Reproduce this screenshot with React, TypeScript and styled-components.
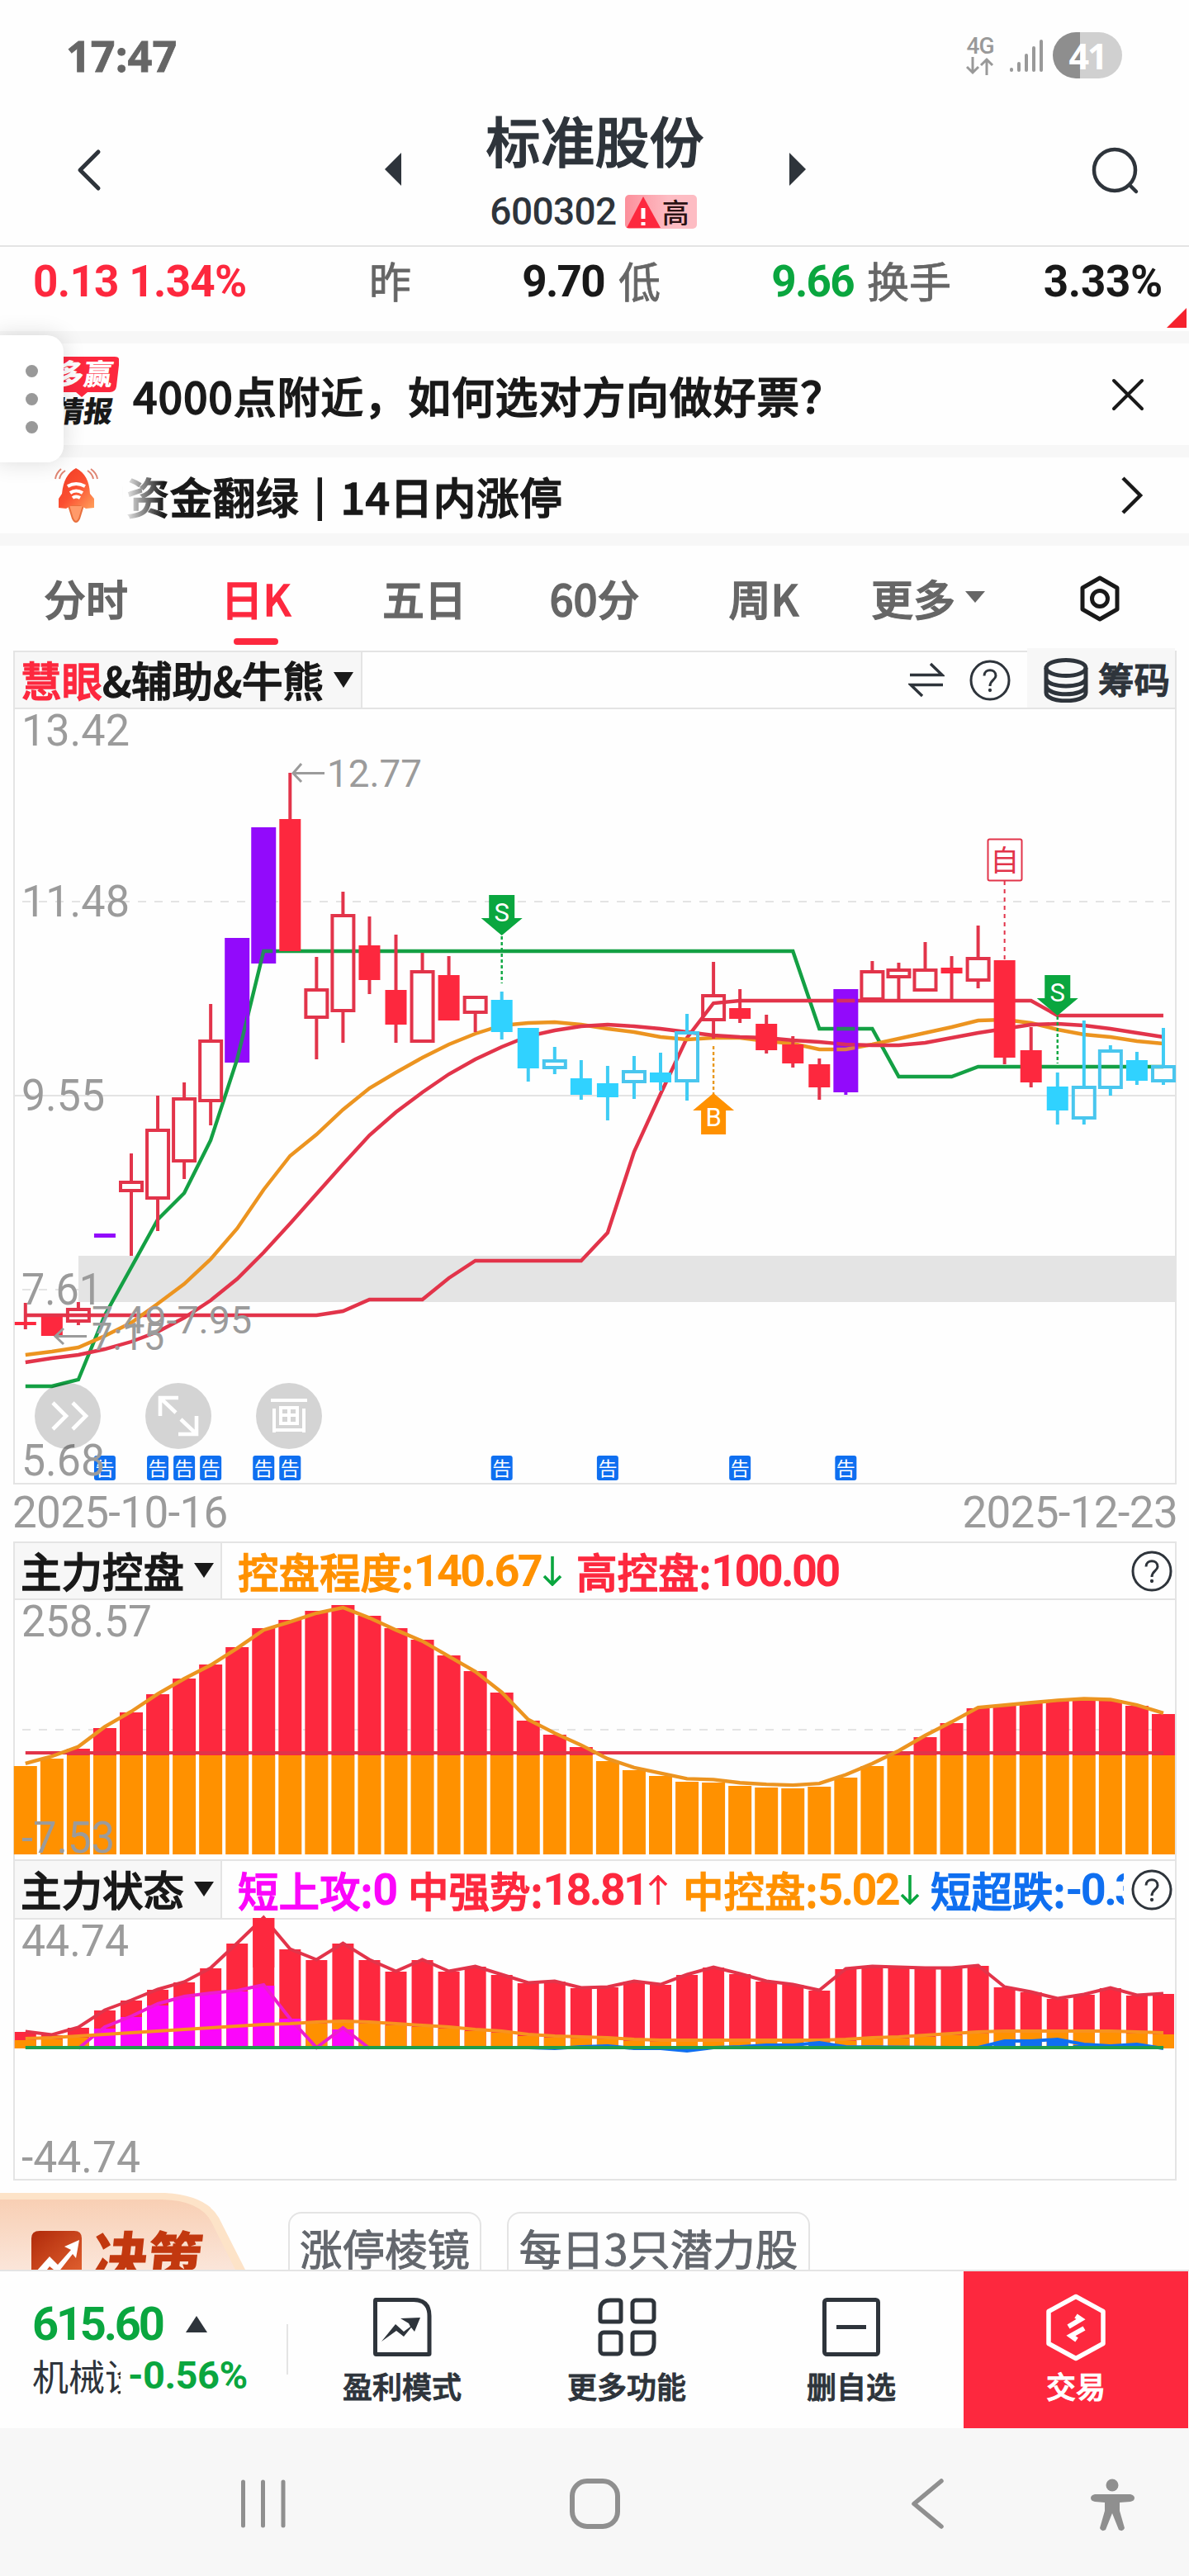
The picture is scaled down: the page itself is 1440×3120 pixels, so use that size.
import React from "react";
import styled, { createGlobalStyle, css } from "styled-components";

const RED = "#fd283e";
const LINE_RED = "#e2344a";
const GREEN = "#0aa63f";
const LINE_GREEN = "#14a044";
const ORANGE = "#ff9100";
const LINE_ORANGE = "#ec9420";
const CYAN = "#30d2ff";
const LINE_CYAN = "#49c6ee";
const PURPLE = "#920afb";
const MAGENTA = "#fb06fb";
const BLUE = "#0f6ff0";
const INK = "#2e343b";
const GREY = "#9b9b9b";
const BORDER = "#e4e4e4";
const CJK = '"Noto Sans CJK SC", sans-serif';

/* a medium weight between the family's regular and bold */
const medium = css`
  -webkit-text-stroke: 1.3px currentColor;
`;

const GlobalStyle = createGlobalStyle`
  html, body { margin: 0; padding: 0; background: #fff; }
  * { box-sizing: border-box; }
  svg { display: block; flex: none; }
`;

const Screen = styled.div`
  position: relative;
  width: 1440px;
  height: 3120px;
  overflow: hidden;
  display: flex;
  flex-direction: column;
  background: #fefefe;
  font-family: Roboto, ${CJK};
  color: #191919;
`;

/* ---------- status bar ---------- */
const StatusBar = styled.div`
  height: 134px;
  flex: none;
  display: flex;
  align-items: center;
  justify-content: space-between;
  padding: 0 81px 0 80px;
`;
const Clock = styled.div`
  font: 700 52px/60px "Open Sans", sans-serif;
  letter-spacing: 0.1px;
  -webkit-text-stroke: 0.8px currentColor;
  color: #666;
`;
const StatusIcons = styled.div`
  display: flex;
  align-items: center;
`;
const Network = styled.div`
  width: 40px;
  display: flex;
  flex-direction: column;
  align-items: center;
  margin-right: 16px;
  font: 500 28px/26px Roboto, sans-serif;
  letter-spacing: -1px;
  color: #999;
`;
const Battery = styled.div`
  width: 84px;
  height: 56px;
  margin-left: 12px;
  border-radius: 28px;
  background: linear-gradient(90deg, #8e8e8e 33px, #d0d0d0 33px);
  color: #fff;
  text-align: center;
  font: 700 43px/57px "Open Sans", sans-serif;
  letter-spacing: -2px;
`;

/* ---------- title bar ---------- */
const TitleBar = styled.header`
  height: 165px;
  flex: none;
  display: flex;
  align-items: flex-start;
  justify-content: space-between;
  border-bottom: 2px solid ${BORDER};
  padding: 0 60px 0 91px;
`;
const IconSlot = styled.div`
  display: flex;
  padding-top: 44px;
  width: 60px;
  justify-content: ${(p: { $end?: boolean }) => (p.$end ? "flex-end" : "flex-start")};
`;
const TitleNav = styled.div`
  display: flex;
  width: 510px;
  margin-left: 15px;
  margin-right: 45px;
  justify-content: space-between;
`;
const NavArrow = styled.div`
  padding-top: 51px;
`;
const TitleBlock = styled.div`
  display: flex;
  flex-direction: column;
  align-items: center;
`;
const StockName = styled.div`
  margin-top: -4px;
  font: 500 66px/76px ${CJK};
  ${medium}
  color: ${INK};
  white-space: nowrap;
`;
const StockCode = styled.div`
  display: flex;
  align-items: center;
  gap: 10px;
  height: 42px;
  margin-top: 29px;
  margin-left: -4px;
  font: 500 46px/42px Roboto, sans-serif;
  letter-spacing: -0.6px;
  color: ${INK};
`;
const RiskTag = styled.div`
  width: 87px;
  height: 41px;
  display: flex;
  align-items: center;
  border-radius: 5px;
  background: linear-gradient(90deg, #fc8f9b, #fdbcc3 60%);
  font: 500 33px/40px ${CJK};
  letter-spacing: 0;
  color: #2a1214;
`;

/* ---------- quote row ---------- */
const QuoteRow = styled.div`
  height: 102px;
  flex: none;
  position: relative;
  display: flex;
  align-items: flex-start;
  padding: 16px 32px 0 40px;
`;
const QuoteCell = styled.div`
  display: flex;
  align-items: center;
  justify-content: space-between;
  height: 52px;
  width: ${(p: { $w: number; $gap?: number }) => p.$w}px;
  margin-left: ${(p: { $w: number; $gap?: number }) => p.$gap || 0}px;
  white-space: nowrap;
`;
const QuoteLabel = styled.span`
  margin-top: -5px;
  font: 400 51px/52px ${CJK};
  -webkit-text-stroke: 0.8px currentColor;
  color: #666;
`;
const QuoteValue = styled.span`
  font: 700 53px/52px Roboto, sans-serif;
  letter-spacing: ${(p: { $c?: string; $ls?: number }) => (p.$ls === undefined ? -1.7 : p.$ls)}px;
  color: ${(p: { $c?: string; $ls?: number }) => p.$c || "#191919"};
`;
const Corner = styled.svg`
  position: absolute;
  right: 3px;
  bottom: 4px;
`;

/* ---------- banners ---------- */
const Divider = styled.div`
  height: 15px;
  flex: none;
  background: #f7f7f7;
`;
const Banner = styled.div`
  height: ${(p: { $h: number }) => p.$h}px;
  flex: none;
  display: flex;
  align-items: center;
  padding: 0 54px 0 0;
`;
const BannerLogo = styled.div`
  width: 144px;
  height: 123px;
  padding-top: 16px;
  display: flex;
  justify-content: flex-end;
`;
const BannerText = styled.div`
  flex: 1;
  padding: 2px 0 0 17px;
  font: 500 52px/60px ${CJK};
  letter-spacing: 0.8px;
  ${medium}
  white-space: nowrap;
`;
const Ticker = styled(BannerText)`
  padding-left: 0;
  letter-spacing: 0.2px;
  word-spacing: 6px;
  text-indent: -47px;
  margin-left: 28px;
  overflow: hidden;
  mask-image: linear-gradient(90deg, transparent 0, #000 50px);
`;
const Handle = styled.div`
  position: absolute;
  left: -4px;
  top: 406px;
  width: 81px;
  height: 154px;
  border-radius: 0 20px 20px 0;
  background: #fff;
  box-shadow: 0 0 28px rgba(0, 0, 0, 0.14);
  display: flex;
  flex-direction: column;
  align-items: center;
  justify-content: center;
  gap: 19px;
  padding-left: 4px;
`;
const Dot = styled.i`
  width: 15px;
  height: 15px;
  border-radius: 50%;
  background: #999;
`;

/* ---------- tabs ---------- */
const Tabs = styled.nav`
  height: 127px;
  flex: none;
  display: flex;
  padding: 0 0 0 2px;
`;
const Tab = styled.div`
  position: relative;
  width: ${(p: { $w: number; $on?: boolean }) => p.$w}px;
  padding-top: 36px;
  display: flex;
  justify-content: center;
  gap: 12px;
  font: 500 51px/54px ${CJK};
  ${medium}
  color: ${(p: { $w: number; $on?: boolean }) => (p.$on ? RED : "#666")};
  white-space: nowrap;
  &::after {
    content: "";
    display: ${(p: { $w: number; $on?: boolean }) => (p.$on ? "block" : "none")};
    position: absolute;
    top: 112px;
    width: 54px;
    height: 8px;
    border-radius: 4px;
    background: ${RED};
  }
`;

/* ---------- chart panels ---------- */
const Panel = styled.section`
  width: 1409px;
  flex: none;
  margin-left: 16px;
  border: 2px solid ${BORDER};
  border-top-width: ${(p: { $join?: boolean }) => (p.$join ? 0 : 2)}px;
`;
const PanelHead = styled.div`
  height: ${(p: { $h: number }) => p.$h}px;
  display: flex;
  align-items: stretch;
  border-bottom: 2px solid ${BORDER};
`;
const Picker = styled.div`
  width: ${(p: { $w: number }) => p.$w}px;
  flex: none;
  display: flex;
  align-items: center;
  gap: 12px;
  padding: 0 0 1px 7px;
  background: #f7f7f7;
  border-right: 2px solid ${BORDER};
  font: 500 49.5px/60px ${CJK};
  ${medium}
  white-space: nowrap;
  & > em { font-style: normal; color: ${RED}; margin-right: -12px; }
`;
const Readings = styled.div`
  flex: 1;
  min-width: 0;
  overflow: hidden;
  display: flex;
  align-items: center;
  padding-left: 19px;
  white-space: nowrap;
`;
const Reading = styled.div`
  display: flex;
  align-items: center;
  height: 60px;
  flex: none;
  width: ${(p: { $w: number; $c: string }) => p.$w}px;
  color: ${(p: { $w: number; $c: string }) => p.$c};
  font: 500 49.5px/60px ${CJK};
  ${medium}
  & > b {
    font: 700 54px/60px Roboto, sans-serif;
    letter-spacing: -2.7px;
    margin-right: 2px;
    -webkit-text-stroke: 0;
  }
`;
const HelpSlot = styled.div`
  width: ${(p: { $w: number; $r?: number }) => p.$w}px;
  display: flex;
  align-items: center;
  justify-content: flex-end;
  padding-right: ${(p: { $w: number; $r?: number }) => p.$r || 3}px;
`;
const ChipsButton = styled.div`
  width: 179px;
  margin-top: -5px;
  padding: 5px 0 0 20px;
  display: flex;
  align-items: center;
  gap: 12px;
  background: #f7f7f7;
  font: 500 43.5px/60px ${CJK};
  ${medium}
  color: ${INK};
  white-space: nowrap;
  & > span { margin-top: -4px; }
`;
const Plot = styled.svg`
  overflow: visible;
  width: 1405px;
`;
const DateRow = styled.div`
  height: 69px;
  flex: none;
  display: flex;
  justify-content: space-between;
  padding: 4px 14px 0 15px;
  font: 400 53px/60px Roboto, sans-serif;
  letter-spacing: -0.7px;
  color: ${GREY};
`;

/* ---------- promo row ---------- */
const PromoRow = styled.div`
  height: 108px;
  flex: none;
  display: flex;
  align-items: flex-start;
  overflow: hidden;
`;
const PromoBadge = styled.div`
  position: relative;
  width: 349px;
  height: 108px;
  flex: none;
`;
const PromoWord = styled.div`
  position: absolute;
  left: 112px;
  top: 51px;
  font: 900 67px/76px ${CJK};
  transform: skewX(-6deg);
  color: #c2380f;
`;
const Chip = styled.div`
  height: 120px;
  width: ${(p: { $w: number }) => p.$w}px;
  margin: 38px 31px 0 0;
  padding-top: 11px;
  flex: none;
  border: 2px solid ${BORDER};
  border-radius: 16px;
  text-align: center;
  font: 400 51.5px/60px ${CJK};
  -webkit-text-stroke: 1px currentColor;
  color: #63676d;
  white-space: nowrap;
`;

/* ---------- action bar ---------- */
const ActionBar = styled.div`
  height: 192px;
  flex: none;
  display: flex;
  border-top: 2px solid ${BORDER};
`;
const IndexBox = styled.div`
  width: 351px;
  padding: 33px 0 0 39px;
  position: relative;
  &::after {
    content: "";
    position: absolute;
    right: 2px;
    top: 64px;
    width: 2px;
    height: 61px;
    background: ${BORDER};
  }
`;
const IndexLine = styled.div`
  display: flex;
  align-items: center;
  height: 62px;
  gap: ${(p: { $gap: number }) => p.$gap}px;
  white-space: nowrap;
`;
const IndexValue = styled.b`
  font: 700 ${(p: { $s: number; $ls: number }) => p.$s}px/60px Roboto, sans-serif;
  letter-spacing: ${(p: { $s: number; $ls: number }) => p.$ls}px;
  color: ${GREEN};
`;
const IndexName = styled.span`
  width: 107px;
  overflow: hidden;
  font: 400 44px/60px ${CJK};
  color: ${INK};
`;
const Action = styled.div`
  width: 272px;
  display: flex;
  flex-direction: column;
  align-items: center;
  padding-top: 25px;
  gap: 4px;
  font: 500 36px/46px ${CJK};
  -webkit-text-stroke: 1px currentColor;
  color: ${(p: { $hot?: boolean }) => (p.$hot ? "#fff" : INK)};
  background: ${(p: { $hot?: boolean }) => (p.$hot ? RED : "transparent")};
`;

/* ---------- system navigation ---------- */
const SysNav = styled.div`
  height: 180px;
  flex: none;
  background: #f7f7f7;
`;

/* ---------- small icons ---------- */
const Tri = ({ w, h, color, dir }: { w: number; h: number; color: string; dir: string }) => {
  const pts: Record<string, string> = {
    down: `0,0 ${w},0 ${w / 2},${h}`,
    up: `0,${h} ${w},${h} ${w / 2},0`,
    left: `${w},0 ${w},${h} 0,${h / 2}`,
    right: `0,0 0,${h} ${w},${h / 2}`,
  };
  return (
    <svg width={w} height={h}>
      <polygon points={pts[dir]} fill={color} />
    </svg>
  );
};

const Help = () => (
  <svg width="50" height="50" viewBox="0 0 50 50" fill="none" stroke={INK} strokeWidth="3">
    <circle cx="25" cy="25" r="23" />
    <path d="M18 19.5C18 10.5 32 10.5 32 19.5C32 24.5 25 24.5 25 32" />
    <circle cx="25" cy="37" r="1.4" fill={INK} strokeWidth="1.5" />
  </svg>
);

const Trend = ({ up }: { up?: boolean }) => (
  <svg width="24" height="36" viewBox="0 0 24 36" fill="none" stroke={up ? RED : GREEN} strokeWidth="3.6">
    <path d={up ? "M12 36V3M2 12L12 2L22 12" : "M12 0V33M2 24L12 34L22 24"} />
  </svg>
);

/* ---------- main chart data ---------- */
const X0 = 30.8;
const STEP = 32.05;
const cx = (i: number) => X0 + i * STEP;

type Kind = "h" | "f" | "ch" | "cf" | "p";
// kind, body top, body bottom, wick top, wick bottom
const candles: [Kind, number, number, number, number][] = [
  ["f", 1601, 1605, 1578, 1610],
  ["f", 1595, 1618, 1593, 1618],
  ["h", 1584, 1602, 1577, 1605],
  ["p", 1494, 1499, 1494, 1499],
  ["h", 1430, 1444, 1397, 1521],
  ["h", 1367, 1453, 1327, 1491],
  ["h", 1329, 1408, 1311, 1428],
  ["h", 1259, 1335, 1216, 1363],
  ["p", 1136, 1287, 1136, 1287],
  ["p", 1002, 1167, 1002, 1167],
  ["f", 992, 1152, 936, 1152],
  ["h", 1197, 1234, 1159, 1283],
  ["h", 1107, 1226, 1080, 1263],
  ["f", 1145, 1187, 1110, 1204],
  ["f", 1199, 1241, 1132, 1263],
  ["h", 1175, 1263, 1154, 1263],
  ["f", 1181, 1236, 1158, 1236],
  ["h", 1206, 1228, 1206, 1250],
  ["cf", 1211, 1250, 1201, 1259],
  ["cf", 1245, 1294, 1245, 1310],
  ["ch", 1283, 1295, 1268, 1301],
  ["cf", 1306, 1326, 1284, 1332],
  ["cf", 1312, 1329, 1291, 1357],
  ["ch", 1296, 1312, 1279, 1331],
  ["cf", 1299, 1311, 1275, 1321],
  ["ch", 1249, 1311, 1228, 1333],
  ["h", 1204, 1237, 1165, 1258],
  ["f", 1221, 1234, 1198, 1239],
  ["f", 1240, 1272, 1229, 1276],
  ["f", 1265, 1288, 1255, 1293],
  ["f", 1289, 1317, 1282, 1332],
  ["p", 1198, 1323, 1198, 1326],
  ["h", 1175, 1212, 1164, 1212],
  ["h", 1173, 1185, 1166, 1212],
  ["h", 1173, 1201, 1141, 1201],
  ["f", 1172, 1179, 1158, 1211],
  ["h", 1159, 1189, 1121, 1197],
  ["f", 1163, 1281, 1163, 1289],
  ["f", 1272, 1311, 1244, 1317],
  ["cf", 1316, 1345, 1299, 1362],
  ["ch", 1315, 1356, 1236, 1362],
  ["ch", 1271, 1319, 1266, 1327],
  ["cf", 1284, 1309, 1274, 1314],
  ["ch", 1290, 1311, 1245, 1314],
];

const maOrange = [
  1641, 1637, 1632, 1618, 1602, 1579, 1555, 1525, 1488, 1441, 1400, 1374, 1344, 1318, 1299, 1281, 1265, 1252,
  1242, 1239, 1238, 1241, 1246, 1250, 1256, 1259, 1257, 1257, 1261, 1264, 1271, 1271, 1265, 1258, 1251, 1244,
  1236, 1235, 1239, 1247, 1253, 1256, 1261, 1264,
];
const maRed = [
  1650, 1645, 1641, 1634, 1625, 1613, 1596, 1575, 1549, 1517, 1482, 1446, 1410, 1375, 1347, 1323, 1301, 1283,
  1268, 1255, 1248, 1243, 1241, 1243, 1246, 1250, 1254, 1256, 1257, 1260, 1262, 1265, 1266, 1266, 1263, 1257,
  1251, 1246, 1241, 1240, 1242, 1246, 1251, 1256,
];
const pairs = (a: [number, number][]) => a.map(([i, y]) => `${cx(i)},${y}`).join(" ");
const series = (a: number[]) => a.map((y, i) => `${cx(i)},${y}`).join(" ");
const greenStep = pairs([
  [0, 1679], [1, 1679], [2, 1671], [3, 1593], [4, 1535], [5, 1477], [6, 1445], [7, 1381], [8, 1283], [9, 1152],
  [29, 1152], [30, 1246], [32, 1246], [33, 1304], [35, 1304], [36, 1292], [43, 1292],
]);
const redStep = pairs([
  [0, 1593], [11, 1593], [12, 1588], [13, 1574], [15, 1574], [16, 1548], [17, 1527], [21, 1527], [22, 1493],
  [23, 1395], [24, 1325], [25, 1257], [26, 1215], [27, 1212], [38, 1212], [39, 1230], [43, 1230],
]);

const MainLines = () => (
  <g fill="none" strokeWidth="4.4">
    <polyline points={greenStep} stroke={LINE_GREEN} />
    <polyline points={redStep} stroke={LINE_RED} />
    <polyline points={series(maOrange)} stroke={LINE_ORANGE} />
    <polyline points={series(maRed)} stroke={LINE_RED} />
  </g>
);

const Candle = ({ i, k, t, b, wt, wb }: { i: number; k: Kind; t: number; b: number; wt: number; wb: number }) => {
  const x = cx(i);
  const color = k === "p" ? PURPLE : k[0] === "c" ? (k === "cf" ? CYAN : LINE_CYAN) : k === "f" ? RED : LINE_RED;
  const wick = k === "p" ? PURPLE : k[0] === "c" ? "#3fccf4" : LINE_RED;
  const hollow = k === "h" || k === "ch";
  const half = k === "p" && b - t > 20 ? 15 : 13;
  return (
    <g>
      {wt < t && <line x1={x} x2={x} y1={wt} y2={t} stroke={wick} strokeWidth="4" />}
      {wb > b && <line x1={x} x2={x} y1={b} y2={wb} stroke={wick} strokeWidth="4" />}
      {hollow ? (
        <rect x={x - 13} y={t + 2} width="26" height={b - t - 4} fill="none" stroke={color} strokeWidth="4" />
      ) : (
        <rect x={x - half} y={t} width={half * 2} height={b - t} fill={color} />
      )}
    </g>
  );
};

const Axis = ({ x = 26, y, w, s = 53, children }: { x?: number; y: number; w: number; s?: number; children: string }) => (
  <text x={x} y={y} fontSize={s} textLength={w} lengthAdjust="spacingAndGlyphs" fill={GREY} fontFamily="Roboto, sans-serif">
    {children}
  </text>
);

const SellMark = ({ i, y, end }: { i: number; y: number; end: number }) => {
  const x = cx(i);
  return (
    <g>
      <line x1={x} x2={x} y1={y + 50} y2={end} stroke={GREEN} strokeWidth="2.4" strokeDasharray="4 3" />
      <polygon
        points={`${x - 15.5},${y} ${x + 15.5},${y} ${x + 15.5},${y + 28} ${x + 25},${y + 28} ${x},${y + 49} ${x - 25},${y + 28} ${x - 15.5},${y + 28}`}
        fill={GREEN}
      />
      <text x={x} y={y + 32} fontSize="31" textAnchor="middle" fill="#fff" fontFamily="Roboto, sans-serif">S</text>
    </g>
  );
};

const ToolCircle = ({ x, children }: { x: number; children: React.ReactNode }) => (
  <g transform={`translate(${x} 1715)`} fill="none" stroke="#fff" strokeWidth="4.6">
    <circle r="40" fill="#000" fillOpacity="0.165" stroke="none" />
    {children}
  </g>
);

const notices = [3, 5, 6, 7, 9, 10, 18, 22, 27, 31];
const purples = [8, 9, 31];

const MainPlot = () => (
  <Plot height="937" viewBox="18 859 1405 937">
    <defs>
      <clipPath id="inPurple">
        {purples.map((i) => (
          <rect key={i} x={cx(i) - 11} y={candles[i][1]} width="22" height={candles[i][2] - candles[i][1]} />
        ))}
      </clipPath>
    </defs>
    <line x1="27" x2="1423" y1="1092" y2="1092" stroke="#e4e4e4" strokeWidth="2" strokeDasharray="10 10" />
    <line x1="27" x2="95" y1="1562" y2="1562" stroke="#e4e4e4" strokeWidth="2" strokeDasharray="10 10" />
    <line x1="18" x2="1423" y1="1327" y2="1327" stroke="#e4e4e4" strokeWidth="2" />
    <rect x="95" y="1521" width="1328" height="56" fill="#e4e4e4" />
    <MainLines />
    {candles.map(([k, t, b, wt, wb], i) => (
      <Candle key={i} i={i} k={k} t={t} b={b} wt={wt} wb={wb} />
    ))}
    <g clipPath="url(#inPurple)" opacity="0.85">
      <MainLines />
    </g>
    {notices.map((i) => (
      <g key={i}>
        <rect x={cx(i) - 13} y="1763" width="26" height="30" rx="3" fill={BLUE} />
        <text x={cx(i)} y="1787" fontSize="23" textAnchor="middle" fill="#fff" fontFamily={CJK}>告</text>
      </g>
    ))}
    <Axis y={903} w={131}>13.42</Axis>
    <Axis y={1110} w={131}>11.48</Axis>
    <Axis y={1345} w={101}>9.55</Axis>
    <Axis y={1580} w={98}>7.61</Axis>
    <Axis y={1787} w={101}>5.68</Axis>
    <Axis x={396} y={953} w={115} s={46}>12.77</Axis>
    <Axis x={111} y={1615} w={194} s={46}>7.49-7.95</Axis>
    <Axis x={111} y={1635} w={88} s={46}>7.15</Axis>
    <g fill="none" stroke={GREY} strokeWidth="3">
      <path d="M393 936.500H355M365 925L355 936.500L365 947" />
      <path d="M105 1618.500H67M77 1609L67 1618.500L77 1628" />
    </g>
    <SellMark i={18} y={1084} end={1191} />
    <SellMark i={39} y={1181} end={1288} />
    <line x1={cx(26)} x2={cx(26)} y1="1267" y2="1325" stroke="#e8981f" strokeWidth="2.4" strokeDasharray="4 3" />
    <polygon
      points={`${cx(26)},1324 ${cx(26) + 25},1345 ${cx(26) + 15},1345 ${cx(26) + 15},1374 ${cx(26) - 15},1374 ${cx(26) - 15},1345 ${cx(26) - 25},1345`}
      fill={ORANGE}
    />
    <text x={cx(26)} y="1364" fontSize="31" textAnchor="middle" fill="#fff" fontFamily="Roboto, sans-serif">B</text>
    <line x1={cx(37)} x2={cx(37)} y1="1067" y2="1163" stroke={LINE_RED} strokeWidth="2" strokeDasharray="5 5" />
    <rect x="1196.500" y="1016.500" width="41" height="50" rx="2" fill="#fff" stroke={LINE_RED} strokeWidth="2" />
    <text x={cx(37)} y="1055" fontSize="35" textAnchor="middle" fill={LINE_RED} fontFamily={CJK}>自</text>
    <ToolCircle x={82}>
      <path d="M-18 -16L-2 0L-18 16M6 -16L22 0L6 16" />
    </ToolCircle>
    <ToolCircle x={216}>
      <path d="M0 -22H-22V0M-22 -22L-3 -4M3 4L22 22M22 0V22H0" />
    </ToolCircle>
    <ToolCircle x={350}>
      <path d="M-22 -19H22M-18 -9V20M18 -9V20M-20 17H20M-10 -10H10V9H-10ZM0 -10V9M-10 -1H10" strokeWidth="4" />
    </ToolCircle>
  </Plot>
);

/* ---------- control panel data ---------- */
const controlTops = [
  2138, 2129, 2117, 2092, 2073, 2051, 2032, 2015, 1994, 1971, 1961, 1950, 1943, 1956, 1971, 1985, 2004, 2023,
  2049, 2083, 2100, 2115, 2132, 2143, 2150, 2157, 2158, 2162, 2164, 2165, 2163, 2152, 2138, 2122, 2103, 2086,
  2068, 2065, 2062, 2059, 2057, 2058, 2065, 2075,
];
const controlLine = controlTops.map((t) => 1946 + (t - 1943) * 0.969);

const ControlPlot = () => (
  <Plot height="314" viewBox="18 1937 1405 314">
    <line x1="27" x2="1423" y1="2094" y2="2094" stroke="#e4e4e4" strokeWidth="2" strokeDasharray="10 10" />
    {controlTops.map((t, i) => (
      <g key={i}>
        {t < 2125 && <rect x={cx(i) - 14} y={t} width="28" height={2125 - t} fill={RED} />}
        <rect x={cx(i) - 14} y={Math.max(t, 2125)} width="28" height={2245 - Math.max(t, 2125)} fill={ORANGE} />
      </g>
    ))}
    <line x1={cx(0)} x2={cx(43)} y1="2122" y2="2122" stroke={LINE_RED} strokeWidth="4" />
    <polyline points={series(controlLine)} fill="none" stroke={LINE_ORANGE} strokeWidth="4.4" />
    <Axis y={1981} w={158}>258.57</Axis>
    <Axis y={2243} w={113}>-7.53</Axis>
  </Plot>
);

/* ---------- state panel data ---------- */
const stateTops = [
  2460, 2464, 2455, 2434, 2422, 2409, 2400, 2383, 2353, 2322, 2360, 2373, 2353, 2373, 2387, 2373, 2387, 2381,
  2391, 2401, 2399, 2407, 2406, 2399, 2403, 2391, 2382, 2390, 2399, 2403, 2410, 2384, 2381, 2382, 2383, 2383,
  2380, 2406, 2412, 2420, 2415, 2407, 2416, 2414,
];
const baseTops = [
  2468, 2467, 2465, 2463, 2461, 2459, 2457, 2455, 2453, 2451, 2450, 2448, 2447, 2448, 2450, 2452, 2454, 2457,
  2459, 2463, 2465, 2466, 2467, 2469, 2470, 2470, 2470, 2470, 2470, 2470, 2470, 2469, 2467, 2466, 2464, 2462,
  2460, 2459, 2459, 2459, 2459, 2459, 2460, 2461,
];
const attack: Record<number, number> = { 3: 2456, 4: 2442, 5: 2428, 6: 2418, 7: 2414, 8: 2411, 9: 2404, 10: 2444, 12: 2457 };
const attackLine = pairs([
  [2, 2480], [3, 2454], [4, 2441], [5, 2426], [6, 2417], [7, 2413], [8, 2410], [9, 2403], [10, 2444], [11, 2479],
  [12, 2455], [13, 2480],
]);
const blue = [
  [19, 2479], [20, 2480], [21, 2478], [22, 2477], [23, 2480], [24, 2480], [25, 2483], [26, 2479], [27, 2478],
  [28, 2476], [29, 2476], [30, 2473], [31, 2478], [35, 2479], [36, 2479], [37, 2471], [38, 2471], [39, 2469],
  [40, 2475], [41, 2477], [42, 2475], [43, 2480],
] as [number, number][];

const StatePlot = () => (
  <Plot height="314" viewBox="18 2324 1405 314">
    {stateTops.map((t, i) => (
      <g key={i}>
        <rect x={cx(i) - 13} y={t} width="26" height={2480 - t} fill={RED} />
        <rect x={cx(i) - 13} y={baseTops[i] + 2} width="26" height={2478 - baseTops[i]} fill={ORANGE} />
        {attack[i] && <rect x={cx(i) - 13} y={attack[i]} width="26" height={2480 - attack[i]} fill={MAGENTA} />}
      </g>
    ))}
    {blue
      .filter(([, y]) => y < 2478)
      .map(([i, y]) => (
        <rect key={i} x={cx(i) - 13} y={y + 1} width="26" height={2479 - y} fill={BLUE} />
      ))}
    <g fill="none" strokeWidth="4">
      <polyline points={series(stateTops.map((t) => t - 0.5))} stroke={LINE_RED} />
      <polyline points={attackLine} stroke="#ee1cce" />
      <polyline points={series(baseTops)} stroke="#f8921e" />
      <polyline points={pairs(blue)} stroke={BLUE} />
    </g>
    <rect x={cx(9) - 13} y="2322" width="26" height="60" fill={RED} />
    <line x1={cx(0)} x2={cx(43)} y1="2479" y2="2479" stroke="#1f9c4c" strokeWidth="4" />
    <Axis y={2368} w={130}>44.74</Axis>
    <Axis y={2630} w={144}>-44.74</Axis>
  </Plot>
);

export default function App() {
  return (
    <>
      <GlobalStyle />
      <Screen>
        <StatusBar>
          <Clock>17:47</Clock>
          <StatusIcons>
            <Network>
              4G
              <svg width="34" height="22" viewBox="0 0 34 22" fill="none" stroke="#999" strokeWidth="3">
                <path d="M8 0V19M1 12L8 19L15 12M25 22V3M18 10L25 3L32 10" />
              </svg>
            </Network>
            <svg width="40" height="40" viewBox="0 0 40 40" stroke="#999" strokeWidth="4" strokeLinecap="round">
              <path d="M2 37V38M11 30V38M20 20V38M29 11V38M38 3V38" />
            </svg>
            <Battery>41</Battery>
          </StatusIcons>
        </StatusBar>

        <TitleBar>
          <IconSlot>
            <svg width="34" height="56" viewBox="0 0 34 56" fill="none" stroke={INK} strokeWidth="5" strokeLinecap="round" strokeLinejoin="round">
              <path d="M28 6L6 28L28 50" />
            </svg>
          </IconSlot>
          <TitleNav>
            <NavArrow>
              <Tri w={20} h={40} color={INK} dir="left" />
            </NavArrow>
            <TitleBlock>
              <StockName>标准股份</StockName>
              <StockCode>
                600302
                <RiskTag>
                  <svg width="45" height="41" viewBox="0 0 45 41">
                    <polygon points="22,2 43,40 2,40" fill="#fd283e" />
                    <path d="M22 16V29M22 33V37" stroke="#fff" strokeWidth="5" />
                  </svg>
                  高
                </RiskTag>
              </StockCode>
            </TitleBlock>
            <NavArrow>
              <Tri w={20} h={40} color={INK} dir="right" />
            </NavArrow>
          </TitleNav>
          <IconSlot $end>
            <svg width="60" height="60" viewBox="0 0 60 60" fill="none" stroke={INK} strokeWidth="4.5" strokeLinecap="round">
              <circle cx="30" cy="28" r="25" />
              <path d="M49 47L56 54" />
            </svg>
          </IconSlot>
        </TitleBar>

        <QuoteRow>
          <QuoteCell $w={258}>
            <QuoteValue $c={RED} $ls={-0.7}>0.13 1.34%</QuoteValue>
          </QuoteCell>
          <QuoteCell $w={285} $gap={149}>
            <QuoteLabel>昨</QuoteLabel>
            <QuoteValue>9.70</QuoteValue>
          </QuoteCell>
          <QuoteCell $w={285} $gap={17}>
            <QuoteLabel>低</QuoteLabel>
            <QuoteValue $c={GREEN}>9.66</QuoteValue>
          </QuoteCell>
          <QuoteCell $w={358} $gap={16}>
            <QuoteLabel>换手</QuoteLabel>
            <QuoteValue $ls={-0.3}>3.33%</QuoteValue>
          </QuoteCell>
          <Corner width="24" height="24">
            <polygon points="24,0 24,24 0,24" fill="#f5222d" />
          </Corner>
        </QuoteRow>

        <Divider />
        <Banner $h={123}>
          <BannerLogo>
            <svg width="144" height="90" viewBox="0 432 144 90">
              <path d="M30 432H139Q145 432 144.500 438L141 468Q140 475 133 475H106L99 481L92 475H28Z" fill={RED} />
              <g fontFamily={CJK} fontWeight="900" fontSize="35">
                <text transform="translate(65 466) skewX(-8)" fill="#fff">多赢</text>
                <text transform="translate(65 511) skewX(-8)" fill="#191919">情报</text>
              </g>
            </svg>
          </BannerLogo>
          <BannerText>4000点附近，如何选对方向做好票？</BannerText>
          <svg width="40" height="40" viewBox="0 0 40 40" stroke="#191919" strokeWidth="4" strokeLinecap="round">
            <path d="M3 3L37 37M37 3L3 37" />
          </svg>
        </Banner>
        <Divider />
        <Banner $h={92}>
          <svg width="120" height="92" viewBox="0 554 120 92">
            <defs>
              <linearGradient id="rocket" x1="0" y1="0" x2="1" y2="1">
                <stop offset="0" stopColor="#ef3b24" />
                <stop offset="0.5" stopColor="#fb4f31" />
                <stop offset="1" stopColor="#ffa15c" />
              </linearGradient>
            </defs>
            <path d="M83 612H101L96 628Q92 636 88 628Z" fill="#ff9a6a" stroke="#e8703e" strokeWidth="2" />
            <path d="M92 567Q108 575 109 598L114 604V615L104 616L97 612H87L80 616L71 615V604L75 598Q77 575 92 567Z" fill="url(#rocket)" />
            <g fill="none" stroke="#fff" strokeWidth="4">
              <path d="M82 589Q92 583 103 589M85 597Q92 592 100 597M88 603Q92 600 97 603" />
            </g>
            <g fill="none" stroke="#e08572" strokeWidth="2">
              <path d="M74 568Q68 573 67 580M79 570Q73 574 72 580M110 568Q117 573 118 580M106 570Q112 574 113 580" />
            </g>
          </svg>
          <Ticker>力资金翻绿 | 14日内涨停</Ticker>
          <svg width="30" height="48" viewBox="0 0 30 48" fill="none" stroke="#191919" strokeWidth="4.5">
            <path d="M4 3L25 24L4 45" />
          </svg>
        </Banner>
        <Divider />

        <Tabs>
          <Tab $w={204}>分时</Tab>
          <Tab $w={208} $on>日K</Tab>
          <Tab $w={200}>五日</Tab>
          <Tab $w={212}>60分</Tab>
          <Tab $w={198}>周K</Tab>
          <Tab $w={200}>
            更多
            <svg width="24" height="54">
              <polygon points="0,19 24,19 12,33" fill="#666" />
            </svg>
          </Tab>
          <Tab $w={216}>
            <svg width="50" height="56" viewBox="0 0 50 56" fill="none" stroke="#191919" strokeWidth="5">
              <path d="M25 3L46 15V41L25 53L4 41V15Z" strokeLinejoin="round" />
              <circle cx="25" cy="28" r="9.500" />
            </svg>
          </Tab>
        </Tabs>

        <Panel>
          <PanelHead $h={69}>
            <Picker $w={421}>
              <em>慧眼</em>&amp;辅助&amp;牛熊
              <Tri w={24} h={19} color="#191919" dir="down" />
            </Picker>
            <Readings />
            <svg width="44" height="67" viewBox="0 0 44 67" fill="none" stroke={INK} strokeWidth="3.4">
              <path d="M2 27.500H41L27 14M42 39.500H3L17 53" />
            </svg>
            <HelpSlot $w={100} $r={20}>
              <Help />
            </HelpSlot>
            <ChipsButton>
              <svg width="54" height="54" viewBox="0 0 54 54" fill="none" stroke={INK} strokeWidth="5">
                <ellipse cx="27" cy="12" rx="24" ry="9.500" />
                <path d="M3 12V42C3 55 51 55 51 42V12M3 25C5 37 49 37 51 25M3 34C5 47 49 47 51 34" />
              </svg>
              <span>筹码</span>
            </ChipsButton>
          </PanelHead>
          <MainPlot />
        </Panel>
        <DateRow>
          <span>2025-10-16</span>
          <span>2025-12-23</span>
        </DateRow>
        <Panel>
          <PanelHead $h={69}>
            <Picker $w={251}>
              主力控盘
              <Tri w={24} h={18} color="#191919" dir="down" />
            </Picker>
            <Readings>
              <Reading $w={410} $c={ORANGE}>控盘程度:<b>140.67</b><Trend /></Reading>
              <Reading $w={320} $c={RED}>高控盘:<b>100.00</b></Reading>
            </Readings>
            <HelpSlot $w={62}>
              <Help />
            </HelpSlot>
          </PanelHead>
          <ControlPlot />
        </Panel>
        <Panel $join>
          <PanelHead $h={71}>
            <Picker $w={251}>
              主力状态
              <Tri w={24} h={18} color="#191919" dir="down" />
            </Picker>
            <Readings>
              <Reading $w={206} $c={MAGENTA}>短上攻:<b>0</b></Reading>
              <Reading $w={333} $c={RED}>中强势:<b>18.81</b><Trend up /></Reading>
              <Reading $w={300} $c={ORANGE}>中控盘:<b>5.02</b><Trend /></Reading>
              <Reading $w={300} $c={BLUE}>短超跌:<b>-0.3</b></Reading>
            </Readings>
            <HelpSlot $w={62}>
              <Help />
            </HelpSlot>
          </PanelHead>
          <StatePlot />
        </Panel>

        <PromoRow>
          <PromoBadge>
            <svg width="349" height="108" viewBox="0 2640 349 108">
              <defs>
                <linearGradient id="promoBg" x1="0" y1="0" x2="0" y2="1">
                  <stop offset="0" stopColor="#f8cfb4" />
                  <stop offset="1" stopColor="#fbe6da" />
                </linearGradient>
                <linearGradient id="promoMark" x1="0" y1="0" x2="1" y2="1">
                  <stop offset="0" stopColor="#b02a0a" />
                  <stop offset="1" stopColor="#e0602f" />
                </linearGradient>
              </defs>
              <path d="M0 2655H200Q250 2658 265 2685L298 2750H0Z" fill="#fde3c8" />
              <path d="M0 2663H196Q242 2664 256 2690L286 2750H0Z" fill="url(#promoBg)" />
              <path d="M38 2710Q38 2701 48 2701H90Q99 2701 99 2710V2752H38Z" fill="url(#promoMark)" />
              <path d="M44 2750L60 2732L70 2742L86 2724L78 2720L96 2712L92 2734L88 2729L70 2752L60 2744L54 2752Z" fill="#fff" />
            </svg>
            <PromoWord>决策</PromoWord>
          </PromoBadge>
          <Chip $w={234}>涨停棱镜</Chip>
          <Chip $w={367}>每日3只潜力股</Chip>
        </PromoRow>

        <ActionBar>
          <IndexBox>
            <IndexLine $gap={28}>
              <IndexValue $s={56} $ls={-3.2}>615.60</IndexValue>
              <Tri w={26} h={20} color={INK} dir="up" />
            </IndexLine>
            <IndexLine $gap={9}>
              <IndexName>机械设备</IndexName>
              <IndexValue $s={47} $ls={-0.5}>-0.56%</IndexValue>
            </IndexLine>
          </IndexBox>
          <Action>
            <svg width="80" height="86" viewBox="0 0 80 86" fill="none" stroke={INK} strokeWidth="5">
              <path d="M8 9.500H54Q73 9.500 73 29V75Q73 75.500 72 75.500H8.500Q7.500 75.500 7.500 74V11Q7.500 9.500 8 9.500Z" strokeLinejoin="round" />
              <path d="M15 60L32 39L42 48L50 42L48 38L38 32L62 31L55 48L51 43L42 54L33 47Z" fill={INK} stroke="none" />
            </svg>
            盈利模式
          </Action>
          <Action>
            <svg width="80" height="86" viewBox="0 0 80 86" fill="none" stroke={INK} strokeWidth="5">
              <path d="M33 13V34Q33 36 31 36H11Q8 36 8 34V22Q8 10 20 10H30Q33 10 33 13Z" />
              <rect x="47" y="10" width="26" height="26" rx="4" />
              <rect x="8" y="49" width="25" height="26" rx="4" />
              <path d="M47 52Q47 49 50 49H70Q73 49 73 52V62Q73 75 60 75H50Q47 75 47 72Z" />
            </svg>
            更多功能
          </Action>
          <Action>
            <svg width="80" height="86" viewBox="0 0 80 86" fill="none" stroke={INK} strokeWidth="5">
              <rect x="7.500" y="9.500" width="65" height="66" rx="3" />
              <path d="M22 42.500H58" />
            </svg>
            删自选
          </Action>
          <Action $hot>
            <svg width="80" height="86" viewBox="0 0 80 86" fill="none" stroke="#fff" strokeWidth="5.500">
              <path d="M40 5.500L73 23.500V62.500L40 80.500L7 62.500V23.500Z" strokeLinejoin="round" />
              <path d="M31 42L46 33L40 29M50 44L34 53L41 58" strokeWidth="6" />
            </svg>
            交易
          </Action>
        </ActionBar>

        <SysNav>
          <svg width="1440" height="180" viewBox="0 2940 1440 180" fill="none" stroke="#8f8f8f" strokeLinecap="round" strokeLinejoin="round">
            <path d="M294.500 3005V3058M318.500 3005V3058M343 3005V3058" strokeWidth="5" />
            <rect x="693" y="3004" width="55" height="55" rx="18" strokeWidth="6" />
            <path d="M1140 3004L1107 3031.500L1140 3059" strokeWidth="5.500" />
            <g fill="#8f8f8f" stroke="none">
              <circle cx="1347" cy="3009" r="7.500" />
              <path d="M1326 3020H1369Q1374 3021 1374 3024.500T1369 3029L1356 3030V3040L1362 3061Q1360 3066 1355 3063L1347 3043L1339 3063Q1334 3066 1332 3061L1338 3040V3030L1326 3029Q1321 3028 1321 3024.500T1326 3020Z" />
            </g>
          </svg>
        </SysNav>

        <Handle>
          <Dot />
          <Dot />
          <Dot />
        </Handle>
      </Screen>
    </>
  );
}
